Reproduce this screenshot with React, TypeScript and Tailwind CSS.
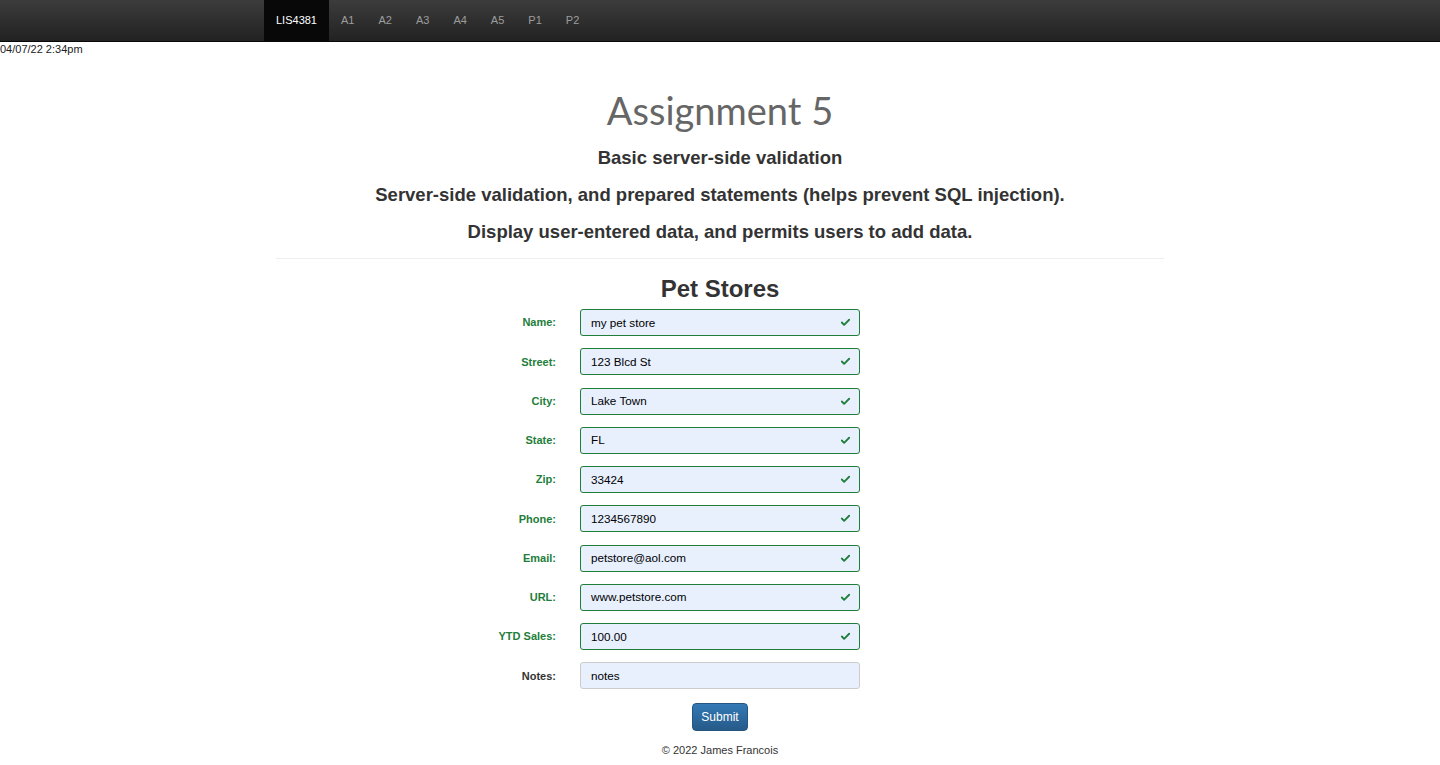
import { Check } from 'lucide-react';

const navItems = ['A1', 'A2', 'A3', 'A4', 'A5', 'P1', 'P2'];

const fields = [
  { label: 'Name:', value: 'my pet store', ok: true },
  { label: 'Street:', value: '123 Blcd St', ok: true },
  { label: 'City:', value: 'Lake Town', ok: true },
  { label: 'State:', value: 'FL', ok: true },
  { label: 'Zip:', value: '33424', ok: true },
  { label: 'Phone:', value: '1234567890', ok: true },
  { label: 'Email:', value: 'petstore@aol.com', ok: true },
  { label: 'URL:', value: 'www.petstore.com', ok: true },
  { label: 'YTD Sales:', value: '100.00', ok: true },
  { label: 'Notes:', value: 'notes', ok: false },
];

export default function App() {
  return (
    <div className="min-h-[765px] bg-white text-[#333] font-['Liberation_Sans',Arial,sans-serif]">
      <nav className="h-[42px] bg-gradient-to-b from-[#3c3c3c] to-[#222] border-b border-[#080808]">
        <div className="flex h-full pl-[264px]">
          <a className="flex items-center h-full px-3 bg-[#080808] text-white text-[11px]">LIS4381</a>
          {navItems.map((n) => (
            <a key={n} className="flex items-center h-full px-3 text-[#9d9d9d] text-[11px]">
              {n}
            </a>
          ))}
        </div>
      </nav>
      <p className="text-[11px] leading-[15px] text-[#222]">04/07/22 2:34pm</p>

      <div className="w-[888px] mx-auto text-center">
        <h1 className="mt-[31px] text-[38px] leading-[44px] text-[#666] font-['Lato','Open_Sans',sans-serif]">
          Assignment 5
        </h1>
        <h4 className="mt-[16px] text-[18.5px] leading-[20px] font-bold">Basic server-side validation</h4>
        <h4 className="mt-[17px] text-[18.5px] leading-[20px] font-bold">
          Server-side validation, and prepared statements (helps prevent SQL injection).
        </h4>
        <h4 className="mt-[17px] text-[18.5px] leading-[20px] font-bold">
          Display user-entered data, and permits users to add data.
        </h4>
        <hr className="mt-[16px] border-t border-[#eee]" />
        <h2 className="mt-[17px] text-[24px] leading-[26px] font-bold">Pet Stores</h2>

        <form className="mt-[7px] flex flex-col gap-[12.25px]">
          {fields.map((f) => (
            <div key={f.label} className="flex items-center gap-6 h-[27px]">
              <label
                className={`w-[280px] text-right text-[11px] font-bold ${
                  f.ok ? 'text-[#1e7e3a]' : 'text-[#333]'
                }`}
              >
                {f.label}
              </label>
              <div
                className={`relative w-[280px] h-[27px] rounded-[3px] border bg-[#e8f0fe] flex items-center pl-[10px] text-[11.7px] text-black ${
                  f.ok ? 'border-[#1e7e3a]' : 'border-[#ccc]'
                }`}
              >
                {f.value}
                {f.ok && (
                  <Check
                    className="absolute right-[8px] top-[7px] text-[#1e7e3a]"
                    size={11}
                    strokeWidth={4}
                  />
                )}
              </div>
            </div>
          ))}
        </form>

        <button className="mt-[14px] w-[56px] h-[28px] rounded-[4px] border border-[#245580] bg-gradient-to-b from-[#337ab7] to-[#265a88] text-white text-[12px]">
          Submit
        </button>
        <p className="mt-[12px] text-[11px] leading-[14px]">© 2022 James Francois</p>
      </div>
    </div>
  );
}
